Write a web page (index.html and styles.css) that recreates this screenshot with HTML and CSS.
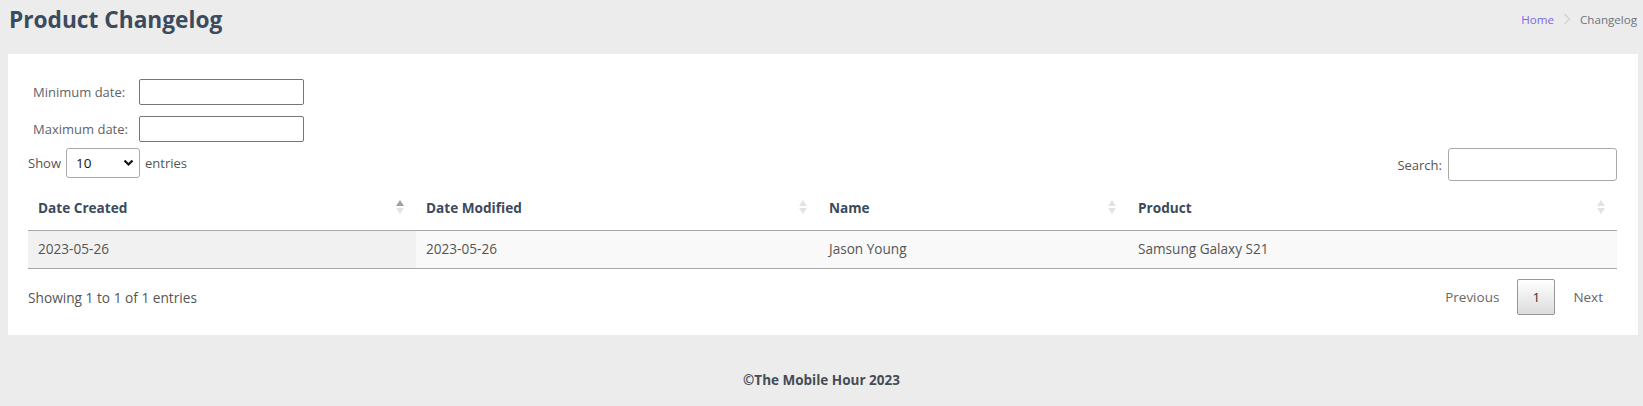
FILE: index.html
```html
<!DOCTYPE html>
<html>
<head>
<meta charset="utf-8">
<link rel="stylesheet" href="styles.css">
</head>
<body>
<header class="topbar">
  <h1 class="title">Product Changelog</h1>
  <nav class="crumbs">
    <a class="crumb-link" href="#">Home</a>
    <span class="crumb-sep">
      <svg width="8" height="12" viewBox="0 0 8 12"><path d="M1.5 1 L6.5 6 L1.5 11" fill="none" stroke="#cfd3d8" stroke-width="1.3"/></svg>
    </span>
    <span class="crumb-current">Changelog</span>
  </nav>
</header>

<main class="card">
  <div class="filters">
    <div class="filter-row">
      <label class="filter-label">Minimum date:</label>
      <input class="filter-input" type="text">
    </div>
    <div class="filter-row">
      <label class="filter-label">Maximum date:</label>
      <input class="filter-input" type="text">
    </div>
  </div>

  <div class="toolbar">
    <div class="length">
      <span>Show</span>
      <div class="select">
        <span>10</span>
        <svg width="11" height="8" viewBox="0 0 11 8"><path d="M1.5 1.5 L5.5 5.5 L9.5 1.5" fill="none" stroke="#111" stroke-width="2.2"/></svg>
      </div>
      <span>entries</span>
    </div>
    <div class="search">
      <span>Search:</span>
      <input class="search-input" type="text">
    </div>
  </div>

  <table class="grid">
    <colgroup>
      <col class="c1"><col class="c2"><col class="c3"><col class="c4">
    </colgroup>
    <thead>
      <tr>
        <th class="sort asc">Date Created</th>
        <th class="sort">Date Modified</th>
        <th class="sort">Name</th>
        <th class="sort">Product</th>
      </tr>
    </thead>
    <tbody>
      <tr class="odd">
        <td class="sorted">2023-05-26</td>
        <td>2023-05-26</td>
        <td>Jason Young</td>
        <td>Samsung Galaxy S21</td>
      </tr>
    </tbody>
  </table>

  <div class="table-foot">
    <div class="info">Showing 1 to 1 of 1 entries</div>
    <div class="pager">
      <span class="pg-text">Previous</span>
      <span class="pg-current">1</span>
      <span class="pg-text">Next</span>
    </div>
  </div>
</main>

<footer class="footer">©The Mobile Hour 2023</footer>
</body>
</html>
```

FILE: styles.css
```css
* { box-sizing: border-box; }
html, body { margin: 0; padding: 0; }
body {
  background: #ececec;
  font-family: "Open Sans", "Noto Sans", sans-serif;
  color: #555;
  width: 1643px;
  height: 406px;
  overflow: hidden;
}
.topbar {
  display: flex;
  justify-content: space-between;
  align-items: center;
  height: 38px;
  margin: 0 6px 16px 9px;
}
.title {
  margin: 0;
  font-size: 22.7px;
  font-weight: 700;
  color: #3b4a5c;
}
.crumbs {
  display: flex;
  align-items: center;
  font-size: 11.6px;
  gap: 9px;
}
.crumb-link { color: #7b67ee; text-decoration: none; }
.crumb-sep { display: flex; align-items: center; }
.crumb-current { color: #6c757d; }

.card {
  background: #fff;
  margin: 0 5px 0 8px;
  height: 281px;
  padding: 25px 21px 0 20px;
}
.filters { display: flex; flex-direction: column; gap: 11px; }
.filter-row { display: flex; align-items: center; }
.filter-label {
  width: 111px;
  padding-left: 5px;
  font-size: 13px;
  color: #5f6368;
}
.filter-input {
  width: 165px;
  height: 26px;
  border: 1px solid #767676;
  border-radius: 2px;
  margin: 0;
}
.toolbar {
  display: flex;
  justify-content: space-between;
  align-items: flex-start;
  margin-top: 6px;
}
.length {
  display: flex;
  align-items: center;
  gap: 5px;
  font-size: 13px;
  color: #555;
  height: 30px;
}
.select {
  width: 74px;
  height: 30px;
  border: 1px solid #aaa;
  border-radius: 3px;
  display: flex;
  align-items: center;
  justify-content: space-between;
  padding: 0 5px 0 9px;
  font-size: 13.5px;
  color: #111;
}
.search {
  display: flex;
  align-items: center;
  gap: 6px;
  font-size: 13px;
  color: #555;
  height: 33px;
}
.search-input {
  width: 169px;
  height: 33px;
  border: 1px solid #aaa;
  border-radius: 3px;
  margin: 0;
}

.grid {
  width: 100%;
  border-collapse: collapse;
  table-layout: fixed;
  margin-top: 9px;
  font-size: 13.6px;
}
.c1 { width: 388px; }
.c2 { width: 403px; }
.c3 { width: 309px; }
.c4 { width: 489px; }
.grid th {
  text-align: left;
  font-weight: 700;
  color: #3b4a5c;
  padding: 8px 18px 12px 10px;
  line-height: 20px;
  border-bottom: 1px solid #a8a8a8;
  position: relative;
}
.grid th.sort::before,
.grid th.sort::after {
  content: "";
  position: absolute;
  right: 12px;
  width: 0;
  height: 0;
  border-left: 4px solid transparent;
  border-right: 4px solid transparent;
}
.grid th.sort::before {
  top: 10px;
  border-bottom: 6px solid #e0e3e7;
}
.grid th.sort::after {
  top: 18px;
  border-top: 6px solid #e0e3e7;
}
.grid th.asc::before { border-bottom-color: #9aa3ad; }
.grid td {
  padding: 8px 10px 9px;
  line-height: 20px;
  color: #555;
  border-bottom: 1px solid #a8a8a8;
}
.grid tr.odd td { background: #f9f9f9; }
.grid tr.odd td.sorted { background: #f1f1f1; }

.table-foot {
  display: flex;
  justify-content: space-between;
  align-items: center;
  margin-top: 9px;
  height: 38px;
}
.info { font-size: 13.7px; color: #555; }
.pager { display: flex; align-items: center; font-size: 13.5px; }
.pg-text { color: #666; padding: 0 14px; }
.pg-current {
  width: 38px;
  height: 36px;
  display: flex;
  align-items: center;
  justify-content: center;
  border: 1px solid #979797;
  border-radius: 2px;
  background: linear-gradient(#fff, #dcdcdc);
  color: #333;
  margin: 0 4px;
}
.footer {
  text-align: center;
  font-size: 13.5px;
  font-weight: 700;
  color: #444c57;
  padding-top: 36px;
}
```
